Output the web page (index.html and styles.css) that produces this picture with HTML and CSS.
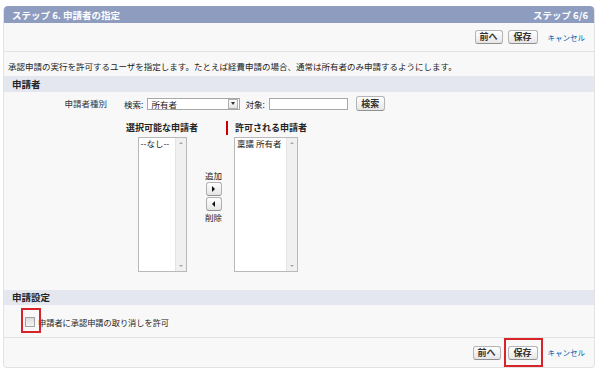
FILE: index.html
```html
<!DOCTYPE html>
<html lang="ja">
<head>
<meta charset="utf-8">
<title>ステップ 6. 申請者の指定</title>
<link rel="stylesheet" href="styles.css">
</head>
<body>
<div class="wizard">
  <div class="hdr">
    <span class="title">ステップ 6. 申請者の指定</span>
    <span class="step">ステップ 6/6</span>
  </div>
  <div class="btnrow top">
    <span class="btn">前へ</span>
    <span class="btn">保存</span>
    <a class="cancel">キャンセル</a>
  </div>
  <p class="desc">承認申請の実行を許可するユーザを指定します。たとえば経費申請の場合、通常は所有者のみ申請するようにします。</p>
  <div class="sec">申請者</div>
  <div class="field">
    <div class="lbl">申請者種別</div>
    <div class="data">
      <div class="search">
        <span class="txt">検索:</span>
        <span class="select"><span class="val">所有者</span><span class="dd"><span class="tri-d"></span></span></span>
        <span class="txt obj">対象:</span>
        <span class="input"></span>
        <span class="btn sbtn">検索</span>
      </div>
      <div class="duel">
        <div class="col c1">
          <div class="colhd">選択可能な申請者</div>
          <div class="list l1"><span class="opt">--なし--</span><span class="sb"><span class="tri-u"></span><span class="tri-dn"></span></span></div>
        </div>
        <div class="col c2">
          <span class="mtxt">追加</span>
          <span class="abtn"><span class="tri-r"></span></span>
          <span class="abtn"><span class="tri-l"></span></span>
          <span class="mtxt">削除</span>
        </div>
        <div class="col c3">
          <div class="colhd"><span class="req"></span>許可される申請者</div>
          <div class="list l2"><span class="opt">稟議 所有者</span><span class="sb"><span class="tri-u"></span><span class="tri-dn"></span></span></div>
        </div>
      </div>
    </div>
  </div>
  <div class="sec sec2">申請設定</div>
  <div class="chk">
    <span class="cbwrap"><span class="cb"></span><span class="mark"></span></span>
    <span class="cblbl">申請者に承認申請の取り消しを許可</span>
  </div>
  <div class="btnrow bottom">
    <span class="btn">前へ</span>
    <span class="btn hl">保存</span>
    <a class="cancel">キャンセル</a>
  </div>
</div>
</body>
</html>
```
FILE: styles.css
```css
* { box-sizing: border-box; }
body {
  margin: 0;
  background: #fff;
  font-family: "Noto Sans CJK JP", "Liberation Sans", sans-serif;
  font-size: 8.5px;
  color: #222;
}
.wizard {
  margin: 6px 5px 3px 3px;
  width: 592px;
  background: #f8f8f8;
  border: 1px solid #e3e3e3;
  border-top: none;
  border-radius: 4px;
  overflow: hidden;
}
.hdr {
  height: 17px;
  background: #8e9dbf;
  color: #fff;
  font-weight: bold;
  font-size: 9.5px;
  display: flex;
  justify-content: space-between;
  align-items: center;
  padding: 0 6px 0 8px;
  border-radius: 4px 4px 0 0;
}
.btnrow {
  display: flex;
  justify-content: flex-end;
  align-items: center;
  padding-right: 9px;
  border-bottom: 1px solid #e2e2e2;
}
.btnrow.top { height: 29px; }
.btnrow.bottom { height: 30px; border-bottom: none; border-top: 1px solid #e2e2e2; }
.btn {
  display: inline-flex;
  align-items: center;
  justify-content: center;
  width: 28px;
  height: 14px;
  border: 1px solid #b5b5b5;
  border-bottom-color: #8f8f8f;
  border-radius: 3px;
  background: linear-gradient(#ffffff, #e6e6e6);
  font-weight: bold;
  font-size: 9px;
  line-height: 12px;
  color: #333;
  margin-left: 5px;
  position: relative;
}
.btnrow .btn + .btn { width: 30px; }
.btnrow.bottom .btn.hl { margin-left: 7px; }
.btn.hl::after {
  content: "";
  position: absolute;
  left: -5px;
  top: -9px;
  right: -6px;
  bottom: -8px;
  border: 2px solid #d8232a;
}
.cancel {
  color: #015ba7;
  margin-left: 10px;
  font-size: 7.5px;
}
.desc {
  margin: 0;
  height: 24px;
  padding: 8px 0 0 4px;
  line-height: 12px;
}
.sec {
  height: 16px;
  line-height: 16px;
  background: #e4e7ef;
  font-weight: bold;
  font-size: 9.5px;
  padding-left: 8px;
}
.sec2 { height: 15px; line-height: 15px; }
.field {
  display: flex;
  padding-top: 4px;
  height: 198px;
}
.lbl {
  width: 103px;
  text-align: right;
  line-height: 15px;
  color: #333;
}
.data { padding-left: 17px; }
.search {
  display: flex;
  align-items: center;
  height: 15px;
}
.txt { line-height: 12px; }
.select {
  margin-left: 4px;
  width: 93px;
  height: 12px;
  border: 1px solid #a8a8a8;
  background: #fff;
  display: flex;
  align-items: center;
  justify-content: space-between;
  padding-left: 3px;
}
.val { line-height: 10px; }
.dd {
  width: 10px;
  height: 10px;
  margin-right: 1px;
  border: 1px solid #b0b0b0;
  background: linear-gradient(#fcfcfc, #e6e6e6);
  display: flex;
  align-items: center;
  justify-content: center;
}
.tri-d {
  width: 0; height: 0;
  border-left: 2.5px solid transparent;
  border-right: 2.5px solid transparent;
  border-top: 3px solid #333;
}
.obj { margin-left: 5px; }
.input {
  margin-left: 4px;
  width: 79px;
  height: 12px;
  border: 1px solid #a8a8a8;
  background: #fff;
}
.search .sbtn { margin-left: 8px; width: 29px; height: 15px; }
.duel {
  display: flex;
  margin-top: 9px;
  margin-left: -2px;
}
.col { display: flex; flex-direction: column; }
.c1 { width: 80px; align-items: center; }
.c2 { width: 23px; align-items: center; padding-top: 49px; }
.c3 { padding-left: 1px; }
.colhd {
  height: 15px;
  line-height: 15px;
  font-weight: bold;
  font-size: 9px;
  display: flex;
  align-items: center;
  margin-bottom: 2px;
}
.req {
  width: 2px;
  height: 14px;
  background: #c00;
  margin-right: 7px;
}
.list {
  height: 135px;
  border: 1px solid #b9b9b9;
  background: #fff;
  position: relative;
  display: flex;
  justify-content: space-between;
}
.l1 { width: 49px; }
.l2 { width: 64px; margin-left: 8px; }
.opt {
  line-height: 11px;
  padding-left: 2px;
  white-space: nowrap;
}
.sb {
  width: 11px;
  height: 100%;
  background: #f0f0f0;
  border-left: 1px solid #e4e4e4;
  display: flex;
  flex-direction: column;
  justify-content: space-between;
  align-items: center;
  padding: 4px 0;
}
.tri-u {
  width: 0; height: 0;
  border-left: 2px solid transparent;
  border-right: 2px solid transparent;
  border-bottom: 2px solid #a5a5a5;
}
.tri-dn {
  width: 0; height: 0;
  border-left: 2px solid transparent;
  border-right: 2px solid transparent;
  border-top: 2px solid #a5a5a5;
}
.mtxt { line-height: 12px; }
.abtn {
  width: 16px;
  height: 14px;
  border: 1px solid #b0b0b0;
  border-bottom-color: #8f8f8f;
  border-radius: 3px;
  background: linear-gradient(#ffffff, #e4e4e4);
  display: flex;
  align-items: center;
  justify-content: center;
  margin-top: 1px;
}
.tri-r {
  width: 0; height: 0;
  border-top: 3px solid transparent;
  border-bottom: 3px solid transparent;
  border-left: 3px solid #111;
}
.tri-l {
  width: 0; height: 0;
  border-top: 3px solid transparent;
  border-bottom: 3px solid transparent;
  border-right: 3px solid #111;
}
.chk {
  height: 32px;
  display: flex;
  align-items: center;
  padding: 2px 0 0 21px;
}
.cbwrap { position: relative; width: 11px; height: 10px; }
.cb {
  display: block;
  width: 10px;
  height: 10px;
  border: 1px solid #a3a3a3;
  background: linear-gradient(#dcdcdc, #f4f4f4);
}
.mark {
  position: absolute;
  left: -4px;
  top: -9px;
  width: 20px;
  height: 25px;
  border: 2px solid #d8232a;
}
.cblbl { margin-left: 2px; font-size: 8.2px; line-height: 12px; }
```
